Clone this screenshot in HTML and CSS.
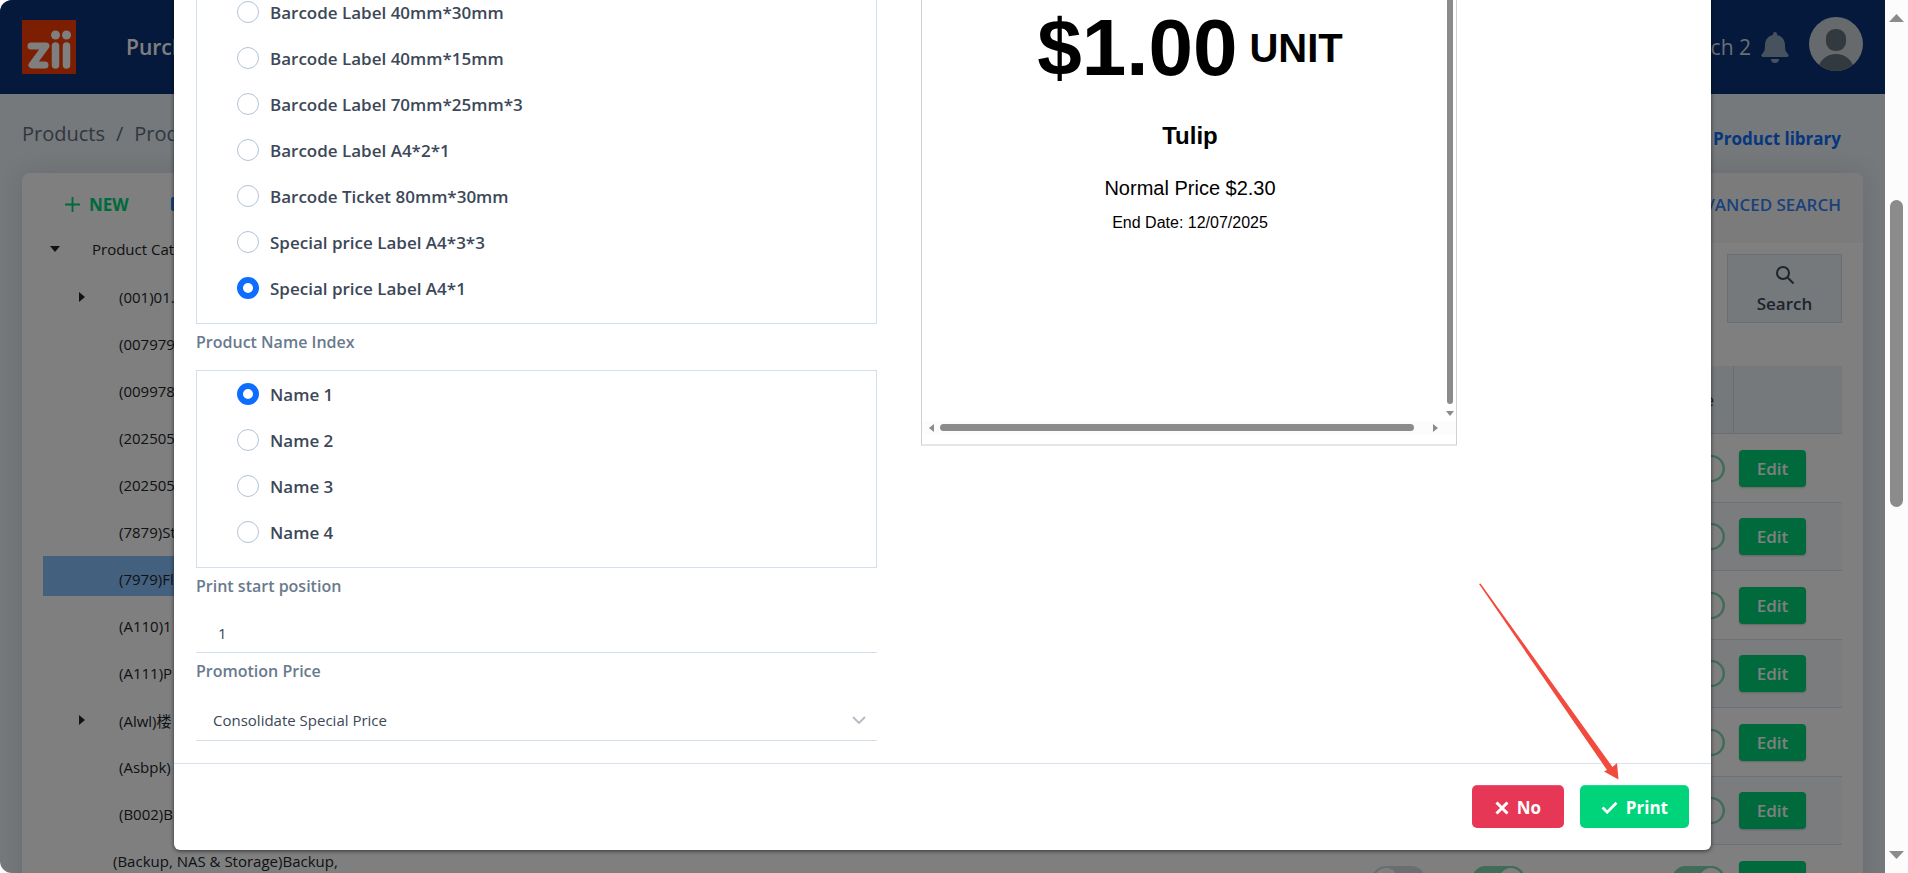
FILE: index.html
```html
<!DOCTYPE html>
<html lang="en">
<head>
    <meta charset="UTF-8">
    <meta name="viewport" content="width=device-width, initial-scale=1.0">
    <title>Products</title>
    <link rel="stylesheet" href="styles.css">
</head>
<body>
<div class="app">
    <header class="navbar">
        <svg class="logo" viewBox="0 0 54 54" aria-label="zii">
            <rect width="54" height="54" fill="#f93c04"/>
            <g stroke="#fff" stroke-linecap="round" stroke-linejoin="round" fill="none">
                <path d="M9 26h15L10 45h13" stroke-width="7"/>
                <path d="M33.500 26v19M44.500 26v19" stroke-width="7.500"/>
            </g>
            <circle cx="33.500" cy="15" r="4.500" fill="#fff"/>
            <circle cx="44.500" cy="15" r="4.500" fill="#fff"/>
        </svg>
        <a class="nav-link" href="#">Purchase</a>
        <div class="nav-right">
            <span class="branch">Branch 2</span>
            <svg class="bell" viewBox="0 0 28 31" fill="#8ea4be">
                <path d="M14 0a2 2 0 0 1 2 2v1c5 1 8 5 8 10 0 6 1 7 3 9 1 1 1 3-1 3H2c-2 0-2-2-1-3 2-2 3-3 3-9C4 8 7 4 12 3V2a2 2 0 0 1 2-2z"/>
                <path d="M10 27h8a4 4 0 0 1-8 0z"/>
            </svg>
            <svg class="avatar" viewBox="0 0 54 54">
                <defs><clipPath id="face"><circle cx="27" cy="27" r="27"/></clipPath></defs>
                <circle cx="27" cy="27" r="27" fill="#cdd5d8"/>
                <g fill="#64727f" clip-path="url(#face)">
                    <rect x="17" y="12" width="20" height="22" rx="9"/>
                    <ellipse cx="27" cy="54" rx="18" ry="17"/>
                </g>
            </svg>
        </div>
    </header>

    <div class="page-head">
        <nav class="breadcrumb"><a href="#">Products</a><span>/</span><a href="#">Products</a></nav>
        <a class="library" href="#">Product library</a>
    </div>

    <main class="card">
        <aside class="sidebar">
            <div class="sidebar-tools">
                <button class="tool tool-new" type="button">
                    <svg viewBox="0 0 16 16" width="15" height="15" stroke="currentColor" stroke-width="2" fill="none"><path d="M8 0v16M0 8h16"/></svg>
                    NEW
                </button>
                <button class="tool" type="button">
                    <svg viewBox="0 0 16 14" width="16" height="14" fill="currentColor"><rect width="16" height="14" rx="2"/></svg>
                    EDIT
                </button>
            </div>
            <ul class="tree">
                <li class="root"><span class="caret caret-down"></span>Product Category</li>
                <li><span class="caret"></span>(001)01.</li>
                <li>(007979)</li>
                <li>(009978)</li>
                <li>(202505)</li>
                <li>(202505)</li>
                <li>(7879)St</li>
                <li class="selected">(7979)Fl</li>
                <li>(A110)1</li>
                <li>(A111)P</li>
                <li><span class="caret"></span>(Alwl)楼</li>
                <li>(Asbpk)</li>
                <li>(B002)B</li>
                <li class="wide">(Backup, NAS &amp; Storage)Backup,</li>
            </ul>
        </aside>
        <section class="products">
            <div class="toolbar">
                <button class="tool" type="button">ADVANCED SEARCH</button>
            </div>
            <div class="products-body">
                <div class="search-row">
                    <button class="search" type="button">
                        <svg viewBox="0 0 18 18" width="18" height="18" fill="none" stroke="currentColor" stroke-width="2"><circle cx="7" cy="7" r="6"/><path d="M11.500 11.500l6 6"/></svg>
                        Search
                    </button>
                </div>
                <table>
                    <thead>
                        <tr><th></th><th class="col"></th><th class="col"></th><th class="col"></th><th class="col">On Sale</th><th class="col-action"></th></tr>
                    </thead>
                    <tbody>
                        <tr><td></td><td></td><td></td><td></td><td><input class="toggle" type="checkbox" aria-label="On Sale" checked></td><td class="action"><button class="edit" type="button">Edit</button></td></tr>
                        <tr><td></td><td></td><td></td><td></td><td><input class="toggle" type="checkbox" aria-label="On Sale" checked></td><td class="action"><button class="edit" type="button">Edit</button></td></tr>
                        <tr><td></td><td></td><td></td><td></td><td><input class="toggle" type="checkbox" aria-label="On Sale" checked></td><td class="action"><button class="edit" type="button">Edit</button></td></tr>
                        <tr><td></td><td></td><td></td><td></td><td><input class="toggle" type="checkbox" aria-label="On Sale" checked></td><td class="action"><button class="edit" type="button">Edit</button></td></tr>
                        <tr><td></td><td></td><td></td><td></td><td><input class="toggle" type="checkbox" aria-label="On Sale" checked></td><td class="action"><button class="edit" type="button">Edit</button></td></tr>
                        <tr><td></td><td></td><td></td><td></td><td><input class="toggle" type="checkbox" aria-label="On Sale" checked></td><td class="action"><button class="edit" type="button">Edit</button></td></tr>
                        <tr><td></td><td><input class="toggle" type="checkbox" aria-label="Weighed"></td><td><input class="toggle" type="checkbox" aria-label="Active" checked></td><td></td><td><input class="toggle" type="checkbox" aria-label="On Sale" checked></td><td class="action"><button class="edit" type="button" aria-label="Edit"></button></td></tr>
                    </tbody>
                </table>
            </div>
        </section>
    </main>

    <div class="overlay">
        <form class="modal" role="dialog" aria-label="Print label">
            <div class="modal-body">
                <div class="options">
                    <div class="radio-box" role="radiogroup" aria-label="Label size">
                        <label class="radio"><input type="radio" name="size">Barcode Label 40mm*30mm</label>
                        <label class="radio"><input type="radio" name="size">Barcode Label 40mm*15mm</label>
                        <label class="radio"><input type="radio" name="size">Barcode Label 70mm*25mm*3</label>
                        <label class="radio"><input type="radio" name="size">Barcode Label A4*2*1</label>
                        <label class="radio"><input type="radio" name="size">Barcode Ticket 80mm*30mm</label>
                        <label class="radio"><input type="radio" name="size">Special price Label A4*3*3</label>
                        <label class="radio"><input type="radio" name="size" checked>Special price Label A4*1</label>
                    </div>
                    <div class="field-label" id="nameIndex">Product Name Index</div>
                    <div class="radio-box" role="radiogroup" aria-labelledby="nameIndex">
                        <label class="radio"><input type="radio" name="nameIndex" checked>Name 1</label>
                        <label class="radio"><input type="radio" name="nameIndex">Name 2</label>
                        <label class="radio"><input type="radio" name="nameIndex">Name 3</label>
                        <label class="radio"><input type="radio" name="nameIndex">Name 4</label>
                    </div>
                    <label class="field-label" for="startPosition">Print start position</label>
                    <input class="field" type="text" id="startPosition" value="1">
                    <label class="field-label" for="promotionPrice">Promotion Price</label>
                    <div class="select-wrap">
                        <select class="field" id="promotionPrice">
                            <option>Consolidate Special Price</option>
                        </select>
                        <svg class="chevron" viewBox="0 0 14 8" fill="none" stroke="#b8bcc6" stroke-width="2"><path d="M1 1l6 6 6-6"/></svg>
                    </div>
                </div>
                <div class="preview-col">
                    <div class="preview">
                        <div class="preview-main">
                            <div class="ticket">
                                <div class="price-row"><span class="price">$1.00</span><span class="unit">UNIT</span></div>
                                <div class="name">Tulip</div>
                                <div class="normal">Normal Price $2.30</div>
                                <div class="end">End Date: 12/07/2025</div>
                            </div>
                            <div class="vscroll">
                                <span class="vthumb"></span>
                                <svg viewBox="0 0 8 5" width="8" height="5" fill="#8b8b8b"><path d="M0 0h8L4 5z"/></svg>
                            </div>
                        </div>
                        <div class="hscroll">
                            <svg viewBox="0 0 5 8" width="5" height="8" fill="#8b8b8b"><path d="M5 0v8L0 4z"/></svg>
                            <span class="hthumb"></span>
                            <svg viewBox="0 0 5 8" width="5" height="8" fill="#8b8b8b"><path d="M0 0v8l5-4z"/></svg>
                        </div>
                    </div>
                </div>
            </div>
            <div class="modal-footer">
                <button class="btn btn-no" type="button">
                    <svg viewBox="0 0 14 14" width="14" height="14" stroke="#fff" stroke-width="3" fill="none"><path d="M1.500 1.500l11 11M12.500 1.500l-11 11"/></svg>
                    No
                </button>
                <button class="btn btn-print" type="submit">
                    <svg viewBox="0 0 18 14" width="17" height="13" stroke="#fff" stroke-width="3" fill="none"><path d="M1.500 7l5 5L16.500 2"/></svg>
                    Print
                </button>
            </div>
            <svg class="pointer" viewBox="0 0 142 197" fill="#f24b3e">
                <path d="M1 1l1.500-.5L134.500 184l4.500-4 1.500 16.500L126 188.500l3-1.500z"/>
            </svg>
        </form>
    </div>
</div>

<div class="scrollbar">
    <svg viewBox="0 0 15 8" width="15" height="8" fill="#8b8b8b"><path d="M7.500 0L15 8H0z"/></svg>
    <div class="track"><span class="thumb"></span></div>
    <svg viewBox="0 0 15 8" width="15" height="8" fill="#8b8b8b"><path d="M0 0h15L7.500 8z"/></svg>
</div>
</body>
</html>
```

FILE: styles.css
```css
* {
    box-sizing: border-box;
}

body {
    font-family: "Open Sans", "Noto Sans CJK SC", sans-serif;
    font-size: 15px;
    color: #212529;
    background-color: #fcfcfc;
    margin: 0;
    display: flex;
    height: 100vh;
    overflow: hidden;
}

a {
    text-decoration: none;
    color: inherit;
}

button, input, select {
    font-family: inherit;
}

.app {
    flex: 1;
    min-width: 0;
    position: relative;
    overflow: hidden;
    background-color: #ebf2f7;
    border-radius: 12px 0 0 12px;
}

/* top bar */
.navbar {
    display: flex;
    align-items: center;
    height: 94px;
    padding: 0 22px;
    background-color: #083278;
    color: #ffffff;
    font-size: 21px;
}

.logo {
    width: 54px;
    height: 54px;
    margin-right: 50px;
}

.nav-link {
    font-weight: 600;
}

.nav-right {
    display: flex;
    align-items: center;
    margin-left: auto;
}

.branch {
    color: #d5dce6;
}

.bell {
    width: 28px;
    height: 31px;
    margin: 0 20px 0 10px;
}

.avatar {
    width: 54px;
    height: 54px;
    margin-bottom: 6px;
}

.page-head {
    display: flex;
    justify-content: space-between;
    align-items: center;
    height: 79px;
    padding: 0 44px 0 22px;
}

.breadcrumb {
    display: flex;
    gap: 11px;
    font-size: 20px;
    color: #5f6f80;
}

.library {
    font-size: 17px;
    font-weight: 700;
    color: #0c6cfb;
    padding-top: 10px;
}

/* product card */
.card {
    display: flex;
    margin: 0 22px;
    background-color: #ffffff;
    border-radius: 8px;
    box-shadow: 0 0 24px rgba(30, 30, 80, 0.14);
}

.sidebar {
    flex: 0 0 350px;
    padding-left: 21px;
}

.sidebar-tools {
    display: flex;
    align-items: center;
    gap: 42px;
    height: 60px;
    padding: 2px 0 0 22px;
}

.tool {
    display: flex;
    align-items: center;
    gap: 9px;
    padding: 0;
    border: none;
    background: none;
    font-size: 17px;
    font-weight: 600;
    color: #3583f5;
}

.tool-new {
    color: #00d47a;
    font-weight: 700;
}

.tree {
    list-style: none;
    margin: 0;
    padding: 0;
}

.tree li {
    display: flex;
    align-items: center;
    position: relative;
    height: 40px;
    margin-bottom: 7px;
    padding: 6px 0 0 76px;
    white-space: nowrap;
}

.tree .root {
    height: 34px;
    padding: 0 0 2px 49px;
}

.tree .wide {
    padding-left: 70px;
}

.tree .selected {
    background-color: #88c0fe;
}

.caret {
    position: absolute;
    left: 36px;
    border: 5px solid transparent;
    border-left: 6px solid #212529;
    border-right: none;
}

.caret-down {
    left: 7px;
    border: 5px solid transparent;
    border-top: 6px solid #212529;
    border-bottom: none;
}

.products {
    flex: 1;
    min-width: 0;
}

.toolbar {
    display: flex;
    align-items: center;
    justify-content: flex-end;
    height: 70px;
    padding: 0 22px 8px;
    background-color: #f7f7f7;
    border-top-right-radius: 8px;
}

.products-body {
    padding-right: 21px;
}

.search-row {
    display: flex;
    justify-content: flex-end;
    padding: 11px 0 43px;
}

.search {
    display: flex;
    flex-direction: column;
    align-items: center;
    justify-content: center;
    gap: 8px;
    width: 115px;
    height: 69px;
    padding: 4px 0 0;
    border: 1px solid #d0dde8;
    background-color: #eaf2f7;
    font-size: 17px;
    font-weight: 600;
    color: #3c4858;
}

table {
    width: 100%;
    table-layout: fixed;
    border-collapse: separate;
    border-spacing: 0;
}

th {
    height: 68px;
    padding: 0 19px 0 0;
    border-right: 1px solid #d3dde6;
    border-bottom: 1px solid #d3dde6;
    background-color: #eaf2f7;
    font-size: 16px;
    font-weight: 400;
    text-align: right;
    color: #3c4858;
}

th:last-child {
    border-right: none;
}

.col {
    width: 100px;
}

.col-action {
    width: 108px;
}

td {
    height: 69px;
    padding: 0 9px 0 0;
    border-bottom: 1px solid #d8e2ef;
    text-align: right;
}

tbody tr:nth-child(even) td {
    height: 68px;
    background-color: #f6f8fd;
}

td.action {
    padding: 0 0 0 5px;
    text-align: left;
}

.toggle {
    appearance: none;
    display: inline-block;
    vertical-align: middle;
    width: 53px;
    height: 27px;
    margin: 0;
    border: 2px solid #d8dbe3;
    border-radius: 14px;
    background: radial-gradient(circle at 12px 50%, #ffffff 11px, #d8dbe3 12px);
}

.toggle:checked {
    border-color: #80d8b0;
    background: radial-gradient(circle at 37px 50%, #ffffff 11px, #80d8b0 12px);
}

.edit {
    width: 67px;
    height: 37px;
    border: none;
    border-radius: 4px;
    background-color: #00d47a;
    box-shadow: 0 1px 2px rgba(0, 0, 0, 0.2);
    color: #ffffff;
    font-size: 17px;
    font-weight: 600;
    vertical-align: middle;
}

/* print dialog */
.overlay {
    position: absolute;
    inset: 0;
    display: flex;
    align-items: flex-end;
    padding: 0 174px 23px;
    background-color: rgba(0, 0, 0, 0.5);
}

.modal {
    position: relative;
    flex: 1;
    background-color: #ffffff;
    border-radius: 6px;
    box-shadow: 0 1px 4px rgba(0, 0, 0, 0.6);
}

.modal-body {
    display: grid;
    grid-template-columns: 47fr 53fr;
    gap: 44px;
    padding: 22px;
}

.radio-box {
    border: 1px solid #d3dfea;
    padding: 0 0 12px 40px;
}

.radio {
    display: flex;
    align-items: center;
    gap: 11px;
    height: 46px;
    font-size: 17px;
    font-weight: 600;
    color: #3c4858;
}

.radio input {
    appearance: none;
    width: 22px;
    height: 22px;
    margin: 0;
    border: 1px solid #b6c1d2;
    border-radius: 50%;
}

.radio input:checked {
    border: 6px solid #0d6efd;
}

.field-label {
    display: block;
    padding-top: 6px;
    margin-bottom: 16px;
    font-size: 16px;
    line-height: 24px;
    font-weight: 600;
    color: #697a8d;
}

.field {
    appearance: none;
    display: block;
    width: 100%;
    height: 39px;
    padding: 0 22px;
    border: none;
    border-bottom: 1px solid #d3dfea;
    background: none;
    font-size: 15px;
    color: #3c4858;
}

.select-wrap {
    position: relative;
}

.select-wrap .field {
    height: 42px;
    padding: 0 17px;
}

.chevron {
    position: absolute;
    right: 11px;
    top: 17px;
    width: 14px;
    height: 8px;
}

.preview {
    display: flex;
    flex-direction: column;
    max-width: 536px;
    height: 458px;
    padding-bottom: 10px;
    border: 1px solid #d0d0d0;
    border-bottom: 2px solid #e6e6e6;
    font-family: "Liberation Sans", Arial, sans-serif;
    color: #000000;
}

.preview-main {
    flex: 1;
    display: flex;
}

.ticket {
    flex: 1;
    padding: 13px 0 0 14px;
    text-align: center;
}

.price-row {
    display: flex;
    justify-content: center;
    align-items: center;
    gap: 12px;
    font-weight: 700;
}

.price {
    font-size: 80px;
    line-height: 92px;
}

.unit {
    font-size: 40px;
    line-height: 46px;
}

.name {
    margin-top: 28px;
    font-size: 24px;
    line-height: 28px;
    font-weight: 700;
}

.normal {
    margin-top: 26px;
    font-size: 20px;
    line-height: 24px;
}

.end {
    margin-top: 13px;
    font-size: 16px;
    line-height: 20px;
}

.vscroll {
    display: flex;
    flex-direction: column;
    align-items: center;
    gap: 7px;
    width: 12px;
    padding-bottom: 5px;
}

.vthumb {
    flex: 1;
    width: 6px;
    border-radius: 3px;
    background-color: #8b8b8b;
}

.hscroll {
    display: flex;
    align-items: center;
    height: 13px;
    padding: 0 18px 0 7px;
    background-color: #fcfcfc;
}

.hthumb {
    flex: 1;
    height: 7px;
    margin: 0 19px 0 6px;
    border-radius: 4px;
    background-color: #8b8b8b;
}

.modal-footer {
    display: flex;
    justify-content: flex-end;
    gap: 16px;
    padding: 21px 22px 22px;
    border-top: 1px solid #d8e2ef;
}

.btn {
    display: flex;
    align-items: center;
    justify-content: center;
    gap: 8px;
    height: 43px;
    padding: 2px 21px 0;
    border: none;
    border-radius: 5px;
    color: #ffffff;
    font-size: 17px;
    font-weight: 700;
    box-shadow: inset 0 1px 0 rgba(255, 255, 255, 0.15);
}

.btn-no {
    min-width: 92px;
    background-color: #e63757;
}

.btn-print {
    background-color: #00d47a;
}

/* arrow drawn over the dialog, tip above the Print button */
.pointer {
    position: absolute;
    right: 91px;
    bottom: 70px;
    width: 142px;
    height: 197px;
}

/* window scrollbar */
.scrollbar {
    display: flex;
    flex-direction: column;
    align-items: center;
    width: 23px;
    padding: 14px 0;
}

.track {
    flex: 1;
    display: flex;
    flex-direction: column;
}

.track::before {
    content: "";
    flex: 43;
}

.track::after {
    content: "";
    flex: 83;
}

.thumb {
    flex: 74;
    width: 13px;
    border-radius: 7px;
    background-color: #8b8b8b;
}
```
